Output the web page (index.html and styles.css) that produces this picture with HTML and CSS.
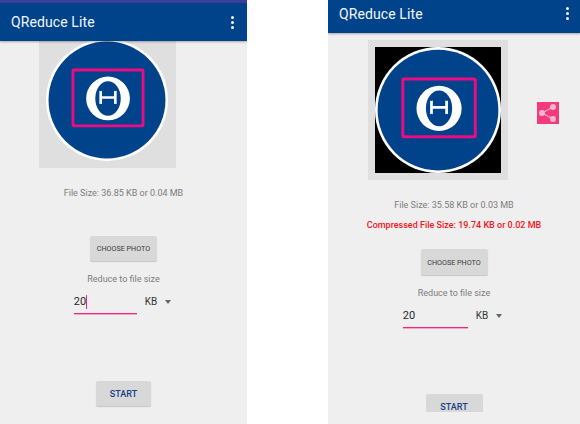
FILE: index.html
```html
<!DOCTYPE html>
<html lang="en">
<head>
<meta charset="utf-8">
<title>QReduce Lite</title>
<link rel="stylesheet" href="styles.css">
</head>
<body>
<svg class="defs" width="0" height="0" aria-hidden="true">
  <symbol id="logo" viewBox="0 0 120 120">
    <circle cx="60" cy="60" r="60" fill="#fff"/>
    <circle cx="60" cy="60" r="57.5" fill="#00438a"/>
    <rect x="26.5" y="30.5" width="69" height="55" rx="1" fill="none" stroke="#ee0a84" stroke-width="2.8"/>
    <ellipse cx="61" cy="58.5" rx="21.5" ry="21.5" fill="#fff"/>
    <ellipse cx="61" cy="58.5" rx="12.5" ry="17" fill="#00438a"/>
    <path d="M52.5 51q1.200 .8 2.600 0v5.200h11.800v-5.200q1.400 .8 2.600 0v13q-1.200-.8-2.600 0v-5.200h-11.800v5.200q-1.400-.8-2.600 0z" fill="#fff"/>
  </symbol>
</svg>
<main class="screens">
  <section class="phone phone-left">
    <div class="status"></div>
    <header class="appbar">
      <span class="title">QReduce Lite</span>
      <span class="menu"><i></i><i></i><i></i></span>
    </header>
    <div class="photo-frame">
      <svg class="logo" viewBox="0 0 120 120"><use href="#logo"/></svg>
    </div>
    <p class="size">File Size: 36.85 KB or 0.04 MB</p>
    <button class="btn choose">CHOOSE PHOTO</button>
    <p class="reduce">Reduce to file size</p>
    <div class="field-row">
      <div class="field"><span>20</span><b class="cursor"></b></div>
      <span class="unit">KB</span>
      <span class="caret"></span>
    </div>
    <button class="btn start">START</button>
  </section>
  <section class="phone phone-right">
    <header class="appbar">
      <span class="title">QReduce Lite</span>
      <span class="menu"><i></i><i></i><i></i></span>
    </header>
    <div class="photo-row">
      <div class="photo-frame">
        <div class="photo-black">
          <svg class="logo" viewBox="0 0 120 120"><use href="#logo"/></svg>
        </div>
      </div>
      <div class="share">
        <svg viewBox="0 0 22 22" width="22" height="22">
          <path d="M16 5 5 11l11 6" fill="none" stroke="#f7b5d0" stroke-width="1.100"/>
          <circle cx="16" cy="5" r="3" fill="#f7b5d0"/>
          <circle cx="5" cy="11" r="3" fill="#f7b5d0"/>
          <circle cx="16" cy="17" r="3" fill="#f7b5d0"/>
        </svg>
      </div>
    </div>
    <p class="size">File Size: 35.58 KB or 0.03 MB</p>
    <p class="compressed">Compressed File Size: 19.74 KB or 0.02 MB</p>
    <button class="btn choose">CHOOSE PHOTO</button>
    <p class="reduce">Reduce to file size</p>
    <div class="field-row">
      <div class="field"><span>20</span></div>
      <span class="unit">KB</span>
      <span class="caret"></span>
    </div>
    <div class="start-clip"><button class="btn start">START</button></div>
  </section>
</main>
</body>
</html>
```
FILE: styles.css
```css
* { box-sizing: border-box; }
html, body { margin: 0; padding: 0; background: #fff; }
body { width: 580px; height: 424px; overflow: hidden; font-family: Roboto, sans-serif; }
.defs { display: block; height: 0; }
.screens { display: flex; gap: 81px; height: 424px; }
.phone { background: #efefef; height: 424px; overflow: hidden; display: flex; flex-direction: column; align-items: center; }
.phone-left { width: 247px; }
.phone-right { width: 252px; }
.status { width: 100%; height: 3px; background: #3b3f9c; flex: none; }
.appbar { width: 100%; flex: none; background: #00438a; color: #f4f7fb; display: flex; align-items: center; justify-content: space-between; box-shadow: 0 1px 2px rgba(0,0,0,.3); position: relative; }
.phone-left .appbar { height: 38px; padding: 0 13px 0 11px; }
.phone-right .appbar { height: 33px; padding: 0 11px 6px 11px; }
.title { font-size: 14px; letter-spacing: 0.1px; }
.menu { display: flex; flex-direction: column; gap: 2px; }
.menu i { width: 3px; height: 3px; border-radius: 50%; background: #f4f7fb; }
.photo-frame { background: #dfdfdf; flex: none; display: flex; }
.phone-left .photo-frame { width: 137px; height: 127px; align-self: flex-start; margin-left: 39px; padding-left: 7px; }
.phone-left .logo { width: 122px; height: 122px; margin-top: -2px; }
.photo-row { display: flex; align-self: flex-start; margin: 7px 0 0 40px; align-items: center; }
.phone-right .photo-frame { width: 140px; height: 140px; padding: 7px; }
.photo-black { width: 126px; height: 126px; background: #000; }
.phone-right .logo { width: 126px; height: 126px; display: block; }
.share { width: 22px; height: 22px; background: #f43a7c; margin: 6px 0 0 29px; flex: none; }
.share svg { display: block; }
p { margin: 0; text-align: center; font-size: 9px; line-height: 12px; color: #7c7c7c; }
.phone-left .size { margin-top: 19px; }
.phone-right .size { margin-top: 19px; }
.compressed { color: #f8141c; font-weight: 500; margin-top: 8px; }
.btn { border: 0; padding: 0; background: #d8d8d8; border-radius: 2px; box-shadow: 0 1px 1px rgba(0,0,0,.18); font-family: inherit; display: block; flex: none; }
.choose { width: 67px; height: 25px; font-size: 7.2px; color: #3a3a3a; }
.phone-left .choose { margin-top: 37px; }
.phone-right .choose { height: 26px; margin-top: 18px; }
.reduce { margin-top: 12px; }
.field-row { display: flex; align-items: flex-start; }
.phone-left .field-row { margin: 8px 2px 0 0; }
.phone-right .field-row { margin: 8px 3px 0 0; }
.field { height: 21px; border-bottom: 1px solid #f5247c; box-shadow: 0 1px 0 rgba(245,36,124,.35); font-size: 11px; line-height: 17px; color: #2a2a2a; display: flex; align-items: flex-start; }
.phone-left .field { width: 63px; }
.phone-right .field { width: 65px; }
.cursor { width: 1px; height: 14px; margin-top: 2px; background: #f5247c; }
.unit { font-size: 10px; line-height: 17px; color: #333; margin-left: 8px; }
.caret { width: 0; height: 0; border-left: 3.5px solid transparent; border-right: 3.5px solid transparent; border-top: 4px solid #666; margin: 7px 0 0 8px; }
.start { width: 55px; height: 25px; font-size: 9px; font-weight: 500; color: #173f85; }
.phone-left .start { margin-top: 67px; }
.start-clip { height: 18px; overflow: hidden; margin-top: 66px; flex: none; }
.phone-right .start { width: 57px; }
```
